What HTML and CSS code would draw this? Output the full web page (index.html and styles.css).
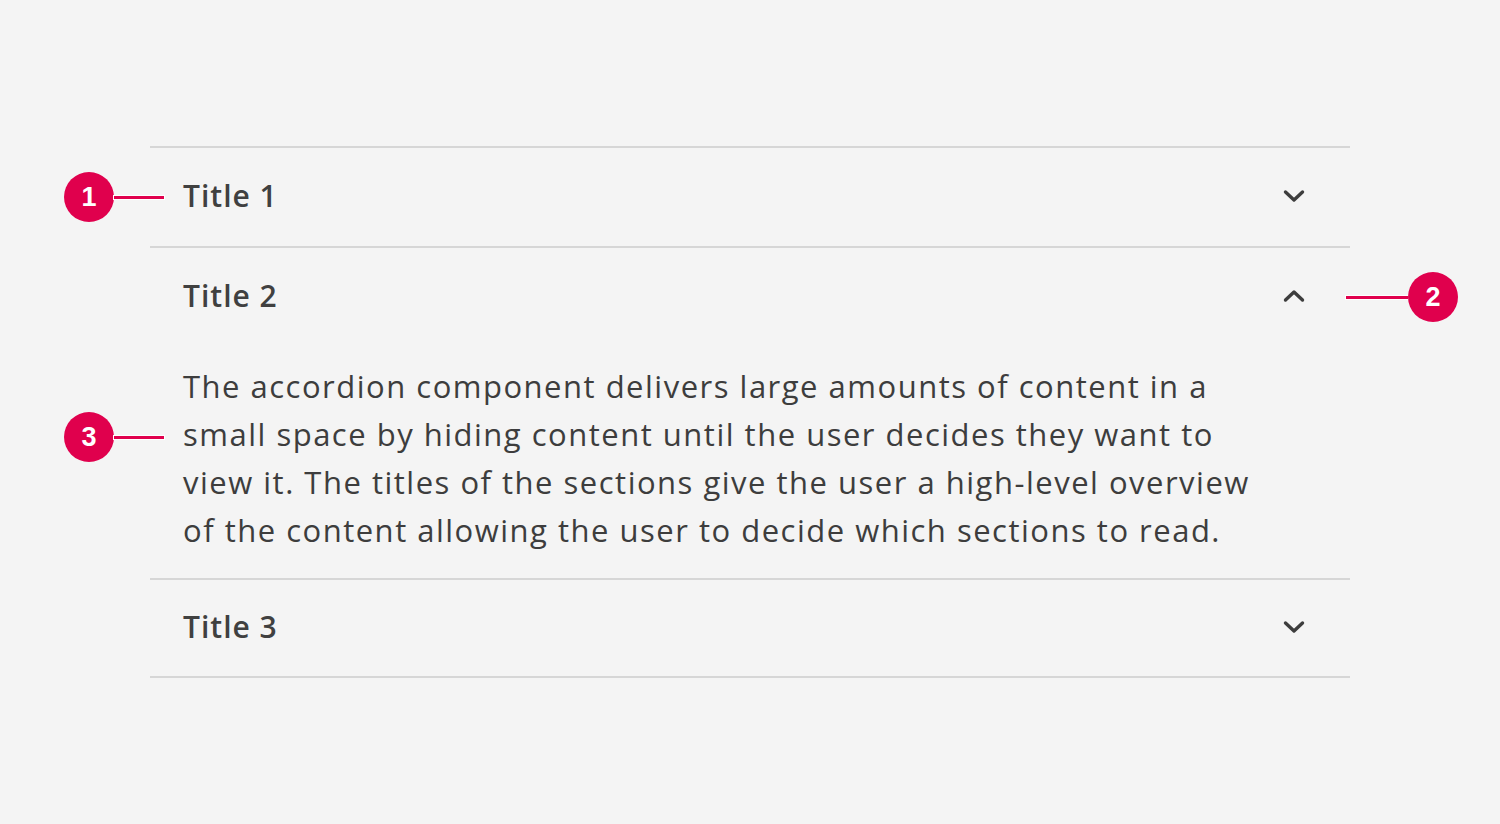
FILE: index.html
```html
<!DOCTYPE html>
<html lang="en">
<head>
<meta charset="utf-8">
<title>Accordion</title>
<link rel="stylesheet" href="styles.css">
</head>
<body>
<main class="stage">
  <ul class="accordion">
    <li class="item">
      <div class="header">
        <span class="title">Title 1</span>
        <svg class="chev" width="22" height="14" viewBox="0 0 22 14"><polyline points="2.5,3 11,11 19.5,3" fill="none" stroke="#3d3d3d" stroke-width="3.4" stroke-linecap="round" stroke-linejoin="round"/></svg>
      </div>
      <span class="marker m1"><span class="dot">1</span><span class="stem"></span></span>
    </li>
    <li class="item open">
      <div class="header">
        <span class="title">Title 2</span>
        <svg class="chev" width="22" height="14" viewBox="0 0 22 14"><polyline points="2.5,11 11,3 19.5,11" fill="none" stroke="#3d3d3d" stroke-width="3.4" stroke-linecap="round" stroke-linejoin="round"/></svg>
      </div>
      <p class="content">The accordion component delivers large amounts of content in a small space by hiding content until the user decides they want to view it. The titles of the sections give the user a high-level overview of the content allowing the user to decide which sections to read.</p>
      <span class="marker m2"><span class="stem"></span><span class="dot">2</span></span>
      <span class="marker m3"><span class="dot">3</span><span class="stem"></span></span>
    </li>
    <li class="item last">
      <div class="header">
        <span class="title">Title 3</span>
        <svg class="chev" width="22" height="14" viewBox="0 0 22 14"><polyline points="2.5,3 11,11 19.5,3" fill="none" stroke="#3d3d3d" stroke-width="3.4" stroke-linecap="round" stroke-linejoin="round"/></svg>
      </div>
    </li>
  </ul>
</main>
</body>
</html>
```

FILE: styles.css
```css
html, body {
  margin: 0;
  padding: 0;
  background: #f4f4f4;
}
body {
  width: 1500px;
  height: 824px;
  overflow: hidden;
  font-family: "Open Sans", "Liberation Sans", sans-serif;
  color: #3d3d3d;
}
.stage {
  padding-top: 146px;
  padding-left: 150px;
}
.accordion {
  list-style: none;
  margin: 0;
  padding: 0;
  width: 1200px;
  border-top: 2px solid #d6d6d6;
}
.item {
  position: relative;
  border-bottom: 2px solid #d6d6d6;
}
.header {
  box-sizing: border-box;
  height: 98px;
  display: flex;
  align-items: center;
  justify-content: space-between;
  padding-left: 33px;
  padding-right: 45px;
  padding-bottom: 3px;
}
.last .header {
  height: 96px;
}
.title {
  font-size: 30px;
  font-weight: 600;
  letter-spacing: 1px;
  color: #404040;
}
.chev {
  display: block;
}
.content {
  margin: 0;
  padding: 16px 82px 24px 33px;
  font-size: 31px;
  line-height: 48px;
  letter-spacing: 1.5px;
}
.marker {
  position: absolute;
  display: flex;
  align-items: center;
}
.dot {
  width: 50px;
  height: 50px;
  border-radius: 50%;
  background: #e0004d;
  color: #fff;
  font-weight: 700;
  font-size: 27px;
  display: flex;
  align-items: center;
  justify-content: center;
  font-family: "Liberation Sans", "Open Sans", sans-serif;
}
.stem {
  height: 3px;
  background: #e0004d;
  box-shadow: 0 0 0 1px #fff;
}
.m1 {
  left: -86px;
  top: 24px;
}
.m1 .stem { width: 50px; }
.m2 {
  left: 1196px;
  top: 24px;
}
.m2 .stem { width: 62px; }
.m3 {
  left: -86px;
  top: 164px;
}
.m3 .stem { width: 50px; }
```
